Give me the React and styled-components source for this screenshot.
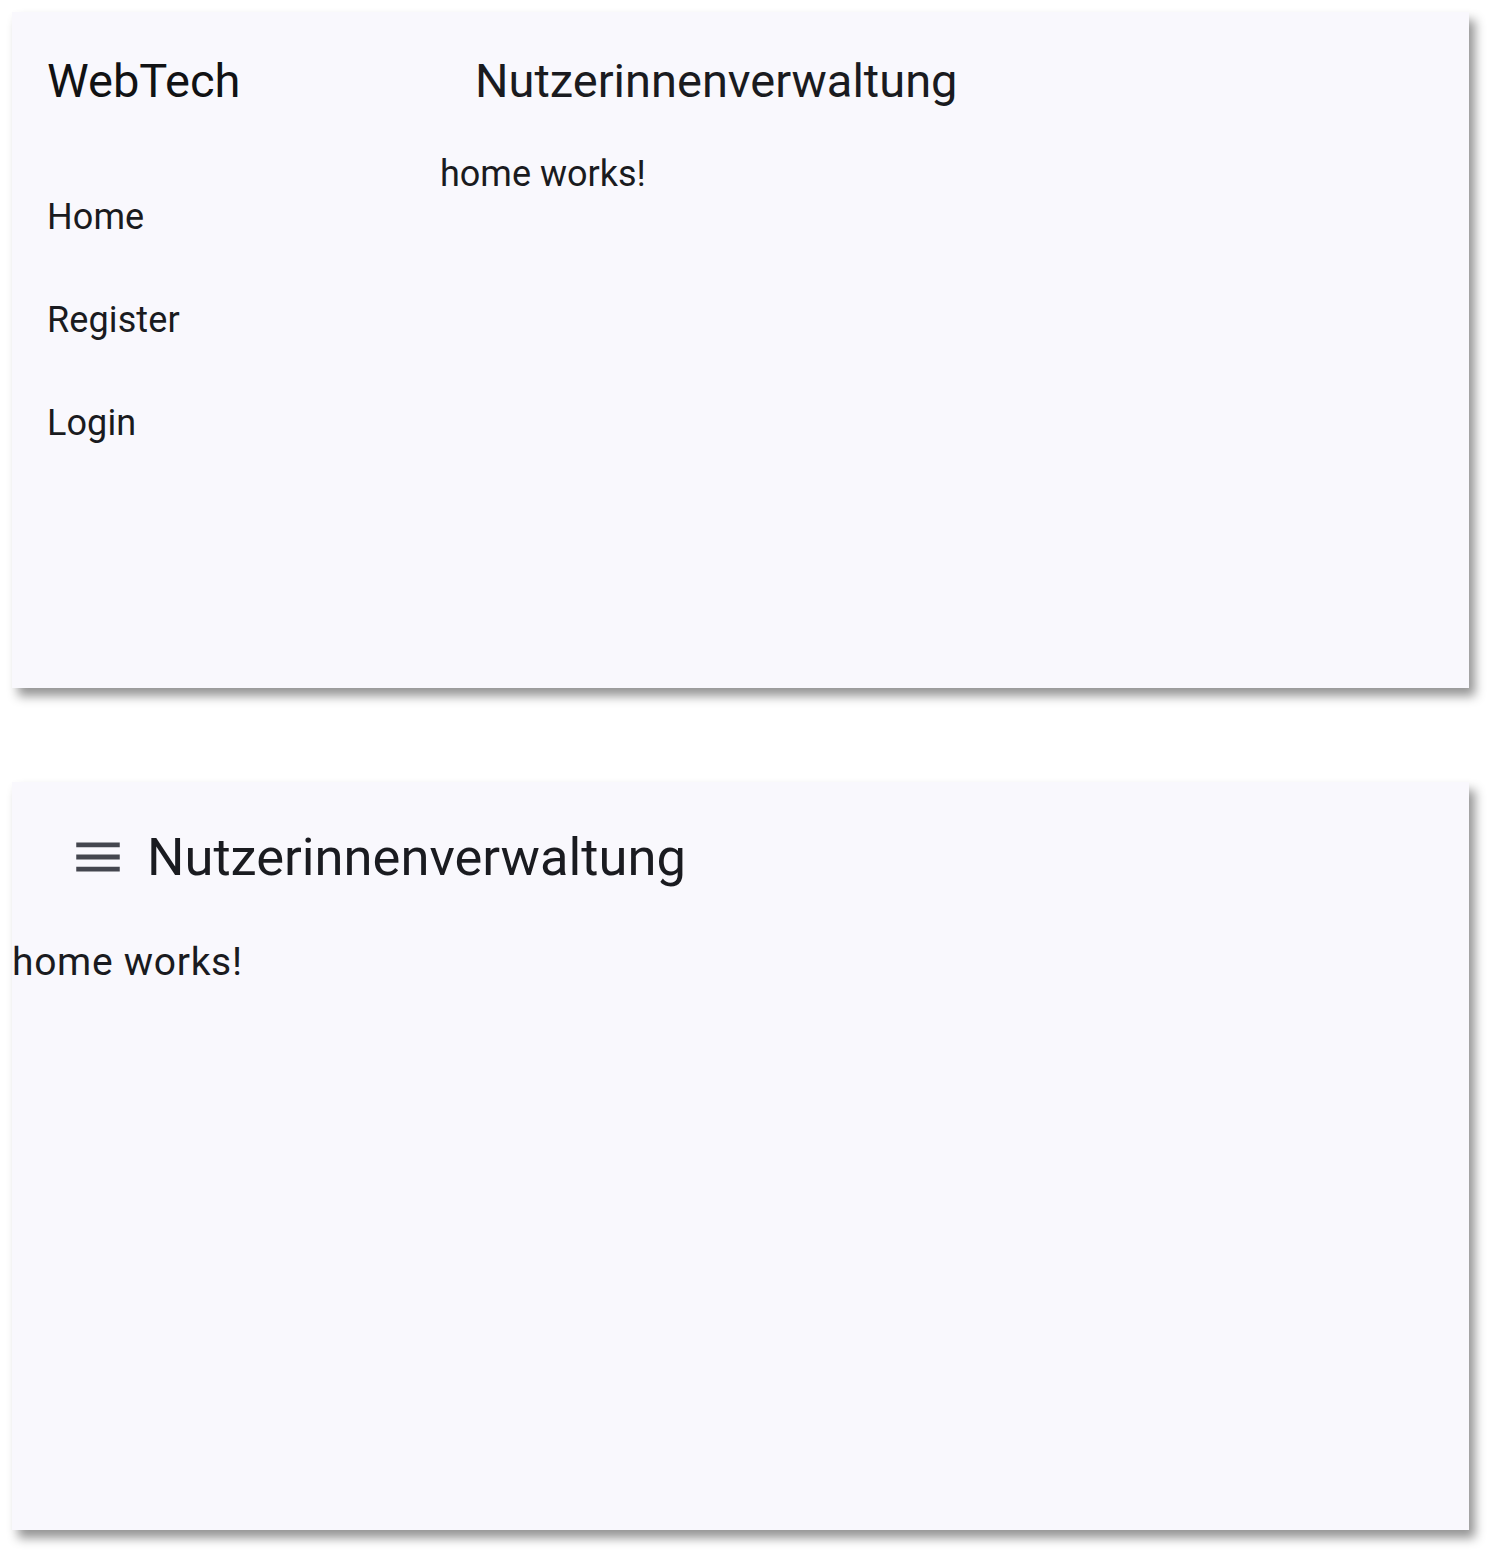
import React from 'react';
import styled, { createGlobalStyle } from 'styled-components';

// page defaults
const GlobalStyle = createGlobalStyle`
    html, body {
        margin: 0;
        padding: 0;
        background: #ffffff;
    }
    body {
        font-family: Roboto, "Liberation Sans", sans-serif;
        color: #1a1b20;
    }
`;

const Page = styled.div`
    display: flex;
    flex-direction: column;
    gap: 94px;
    padding: 12px 29px 32px 12px;
`;

const Frame = styled.div`
    background: #f9f8fd;
    height: ${props => props.height}px;
    box-shadow: 6px 8px 10px rgba(0, 0, 0, 0.42);
    overflow: hidden;
`;

// desktop layout
const Shell = styled.div`
    display: grid;
    grid-template-columns: 428px 1fr;
    height: 100%;
`;

const Sidebar = styled.nav`
    display: flex;
    flex-direction: column;
    padding-left: 35px;
`;

const Brand = styled.div`
    display: flex;
    align-items: center;
    height: 136px;
    font-size: 47px;
    color: #111214;
`;

const NavList = styled.ul`
    list-style: none;
    margin: 0;
    padding: 17px 0 0;
`;

const NavItem = styled.li`
    display: flex;
    align-items: center;
    height: 103px;
    font-size: 36px;
    letter-spacing: 0.1px;
    color: #1a1b20;
`;

const Main = styled.main`
    display: flex;
    flex-direction: column;
`;

const Toolbar = styled.header`
    display: flex;
    align-items: center;
    gap: ${props => props.gap || 0}px;
    height: ${props => props.height}px;
    padding-left: ${props => props.inset}px;
`;

const Title = styled.h1`
    margin: 0;
    font-weight: 400;
    font-size: ${props => props.size}px;
    color: #1a1b20;
`;

const Body = styled.p`
    margin: ${props => props.top}px 0 0;
    font-size: ${props => props.size}px;
    letter-spacing: ${props => props.spacing || 0}px;
    color: #1a1b20;
`;

const MenuButton = styled.button`
    display: flex;
    align-items: center;
    justify-content: center;
    width: 58px;
    height: 58px;
    padding: 0;
    border: none;
    background: none;
    color: #44464f;
`;

const MenuIcon = () => (
    <svg width="58" height="58" viewBox="0 0 24 24" fill="currentColor">
        <path d="M3 18h18v-2H3v2zm0-5h18v-2H3v2zm0-7v2h18V6H3z" />
    </svg>
);

export default function App() {
    const links = ['Home', 'Register', 'Login'];

    return (
        <>
            <GlobalStyle />
            <Page>
                {/* wide view with side navigation */}
                <Frame height={676}>
                    <Shell>
                        <Sidebar>
                            <Brand>WebTech</Brand>
                            <NavList>
                                {links.map(link => (
                                    <NavItem key={link}>{link}</NavItem>
                                ))}
                            </NavList>
                        </Sidebar>
                        <Main>
                            <Toolbar height={136} inset={35}>
                                <Title size={47}>Nutzerinnenverwaltung</Title>
                            </Toolbar>
                            <Body size={36} top={5}>home works!</Body>
                        </Main>
                    </Shell>
                </Frame>

                {/* narrow view with menu button */}
                <Frame height={748}>
                    <Main>
                        <Toolbar height={150} inset={57} gap={20}>
                            <MenuButton aria-label="Menu">
                                <MenuIcon />
                            </MenuButton>
                            <Title size={52.5}>Nutzerinnenverwaltung</Title>
                        </Toolbar>
                        <Body size={39} top={7} spacing={0.7}>home works!</Body>
                    </Main>
                </Frame>
            </Page>
        </>
    );
}
